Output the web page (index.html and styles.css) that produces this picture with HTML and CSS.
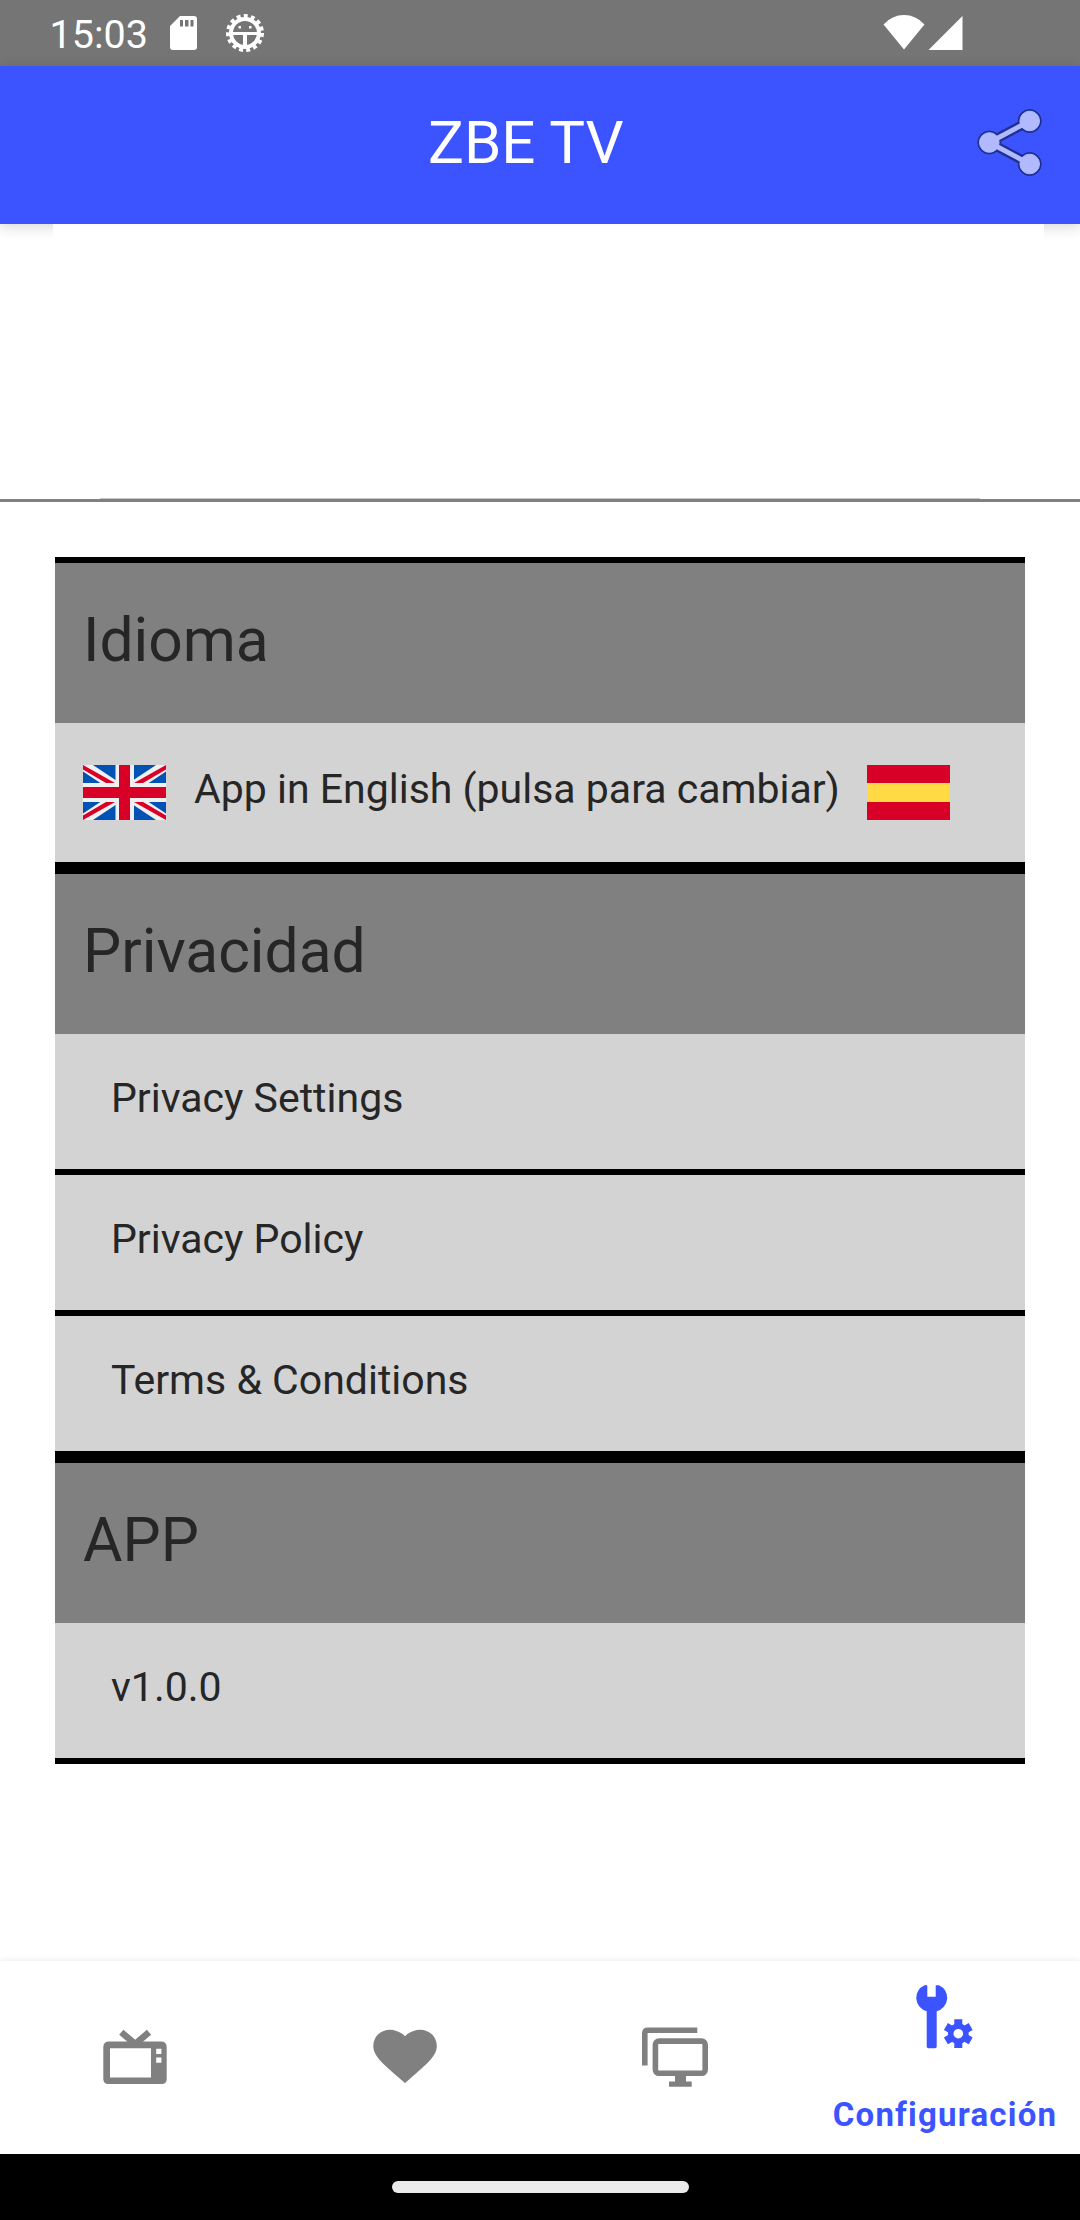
FILE: index.html
```
<!DOCTYPE html>
<html lang="es">
<head>
<meta charset="utf-8">
<title>ZBE TV</title>
<link rel="stylesheet" href="styles.css">
</head>
<body>
<div class="screen">
  <div class="status-bar">
    <span class="clock">15:03</span>
    <svg class="icon-sd" width="27" height="34" viewBox="0 0 27 34"><path fill="#fff" fill-rule="evenodd" d="M10 0h14q3 0 3 3v28q0 3-3 3H3q-3 0-3-3V10zM10 4v6.500h3V4zM15 4v6.500h3.500V4zM20.500 4v6.500h3V4z"/></svg>
    <svg class="icon-debug" width="40" height="40" viewBox="-20 -20 40 40" fill="none" stroke="#fff">
      <circle r="14" stroke-width="4"/>
      <circle r="16.800" stroke-width="4.400" stroke-dasharray="3.900 3.140"/>
      <path stroke-width="3" d="M-13 .5H13"/><path stroke-width="4" d="M0 1V14"/>
      <path stroke="none" fill="#fff" d="M-6.500-7h2.500v2.500h-2.500zM4-7h2.500v2.500H4z"/>
    </svg>
    <svg class="icon-signal" width="80" height="36" viewBox="0 0 80 36" fill="#fff"><path d="M.5 9.500Q9 0 21 0T41.500 9.500L21 34.500zM45.500 35L79.500 1V35z"/></svg>
  </div>
  <header class="app-bar">
    <h1 class="app-title">ZBE TV</h1>
    <svg class="icon-share" width="66" height="70" viewBox="976 108 66 70">
      <g fill="#20308f" stroke="#20308f"><path fill="none" stroke-width="9.500" d="M1029.700 121L989.300 142.500L1029.700 164"/><circle cx="1029.700" cy="121" r="11.500"/><circle cx="989.300" cy="142.500" r="11.500"/><circle cx="1029.700" cy="164" r="11.500"/></g>
      <g fill="#b1baff" stroke="#b1baff"><path fill="none" stroke-width="5" d="M1029.700 121L989.300 142.500L1029.700 164"/><circle cx="1029.700" cy="121" r="9.800"/><circle cx="989.300" cy="142.500" r="9.800"/><circle cx="1029.700" cy="164" r="9.800"/></g>
    </svg>
  </header>
  <div class="banner"></div>
  <div class="divider"><div class="divider-soft"></div></div>
  <main class="settings">
    <section class="group">
      <h2 class="group-title">Idioma</h2>
      <div class="row row-language">
        <svg width="83" height="55" viewBox="0 0 83 55">
          <rect width="83" height="55" fill="#0052b4"/>
          <path stroke="#f0f0f0" stroke-width="11" d="M0 0L83 55M83 0L0 55"/>
          <path fill="#d80027" d="M0 0v4.500L23 18H32zM83 0v4.500L60 18H51zM0 55v-4.500L23 37H32zM83 55v-4.500L60 37H51z"/>
          <path fill="#f0f0f0" d="M32.500 0h18.500v18H83v19H51v18H32.500V37H0V18h32.500z"/>
          <path fill="#d80027" d="M36 0h11v22H83v11H47v22H36V33H0V22h36z"/>
        </svg>
        <span class="language-label">App in English (pulsa para cambiar)</span>
        <svg width="83" height="55" viewBox="0 0 83 55"><rect width="83" height="55" fill="#d80027"/><rect y="18" width="83" height="19" fill="#ffda44"/></svg>
      </div>
    </section>
    <section class="group">
      <h2 class="group-title">Privacidad</h2>
      <div class="row">Privacy Settings</div>
      <div class="row">Privacy Policy</div>
      <div class="row">Terms &amp; Conditions</div>
    </section>
    <section class="group">
      <h2 class="group-title">APP</h2>
      <div class="row">v1.0.0</div>
    </section>
  </main>
  <nav class="tabs">
    <div class="tab">
      <svg width="66" height="66" viewBox="102 2023 66 66" fill="#808080"><path fill-rule="evenodd" d="M109 2041.500h52q5.700 0 5.700 5.700V2079q0 5-5 5H108.500q-5.200 0-5.200-5v-31.800q0-5.700 5.700-5.700zM110 2048.300v29.200h41v-29.200zM156.200 2048.700v5.200h5.200v-5.200zM156.200 2057.600v5.200h5.200v-5.200z"/><path fill="none" stroke="#808080" stroke-width="6.500" d="M121.300 2032.200L135.200 2044L149 2032.200"/></svg>
    </div>
    <div class="tab">
      <svg width="66" height="66" viewBox="372 2023 66 66"><path fill="#808080" d="M405 2083L400 2078.700C383 2064 373.300 2056 373.300 2046C373.300 2037 380.500 2029.700 389.700 2029.700C395.500 2029.700 401 2032.200 405 2036.200C409 2032.200 414.500 2029.700 420.300 2029.700C429.500 2029.700 436.800 2037 436.800 2046C436.800 2056 427 2064 410 2078.700z"/></svg>
    </div>
    <div class="tab">
      <svg width="66" height="66" viewBox="642 2023 66 66" fill="none" stroke="#808080" stroke-width="5.600"><path d="M644.800 2065.500V2033.200q0-3 3-3H697.300"/><rect x="655.400" y="2041.100" width="49.800" height="32.200" rx="3.500"/><path fill="#808080" stroke="none" d="M675 2075h11v6.500h5.700v5.300h-22.700v-5.300h6z"/></svg>
    </div>
    <div class="tab tab-active">
      <svg width="66" height="66" viewBox="912 1984 66 66" fill="#3b54ff"><path d="M927.300 1985.200V1996.700H935.700V1985.200H939A13.800 13.800 0 0 1 936.700 2011.200V2046.500q0 1.800-1.800 1.800H928.500q-1.800 0-1.800-1.800V2011.200A13.800 13.800 0 0 1 924.500 1985.200z"/><g fill="none" stroke="#3b54ff"><circle cx="958.300" cy="2033.700" r="7.600" stroke-width="5.600"/><path stroke-width="8" d="M958.300 2019.300v6.500M958.300 2041.600v6.500M945.900 2026.500l5.400 3.100M965.300 2037.800l5.400 3.100M970.700 2026.500l-5.400 3.100M951.300 2037.800l-5.400 3.100"/></g></svg>
      <span class="tab-label">Configuración</span>
    </div>
  </nav>
  <div class="gesture-bar"><div class="gesture-pill"></div></div>
</div>
</body>
</html>
```
FILE: styles.css
```
* { box-sizing: border-box; }
body { margin: 0; background: #fff; font-family: Roboto, "Noto Sans", sans-serif; }
svg { display: block; flex: none; }
.screen { width: 1080px; height: 2220px; display: flex; flex-direction: column; overflow: hidden; }

.status-bar { flex: none; height: 66px; display: flex; align-items: flex-start; background: #757575; color: #fff; }
.clock { width: 120.5px; margin-left: 49.5px; line-height: 69px; font-size: 39.5px; }
.icon-sd { margin-top: 16px; }
.icon-debug { margin: 13px 0 0 27.700px; }
.icon-signal { margin: 14.500px 117.500px 0 auto; }

.app-bar { flex: none; height: 158px; display: flex; align-items: flex-start; padding: 0 38px 0 428px; background: #3b54ff; color: #fff; box-shadow: 0 3px 13px rgba(0, 0, 0, .16); }
.app-title { margin: 0; font-size: 60px; font-weight: 400; line-height: 153px; }
.icon-share { margin: 42px 0 0 auto; }

.banner { position: relative; flex: none; height: 274px; margin: 0 36px 0 53px; background: #fff; }
.divider { flex: none; height: 4px; border-bottom: 3px solid #808080; }
.divider-soft { width: 880px; height: 1px; margin: 0 auto; background: #c4c4c4; }

.settings { flex: 1; padding: 55px 55px 0; color: #262626; }
.group { border: solid #000; border-width: 6px 0; }
.group-title { margin: 0; height: 160px; padding-left: 28px; background: #808080; font-size: 60.500px; font-weight: 400; line-height: 155px; }
.row { height: 135px; padding-left: 56px; background: #d3d3d3; font-size: 41px; line-height: 129px; }
.row + .row { height: 141px; border-top: 6px solid #000; }
.row-language { height: 139px; display: flex; align-items: center; gap: 28px; padding-left: 28px; line-height: 133px; }
.language-label { width: 645px; height: 139px; white-space: nowrap; }

.tabs { flex: none; height: 193px; display: grid; grid-template-columns: repeat(4, 1fr); background: #fff; box-shadow: 0 0 6px rgba(0, 0, 0, .1); clip-path: inset(-6px 0 0 0); }
.tab { display: flex; flex-direction: column; align-items: center; padding-top: 62px; }
.tab-active { padding-top: 23px; color: #3b54ff; }
.tab-label { margin-top: 44px; font-size: 33px; font-weight: 700; line-height: 42px; letter-spacing: 1.2px; white-space: nowrap; }

.gesture-bar { flex: none; height: 66px; padding-top: 27px; background: #000; }
.gesture-pill { width: 297px; height: 12px; margin: 0 auto; border-radius: 6px; background: #ebebeb; }
```
